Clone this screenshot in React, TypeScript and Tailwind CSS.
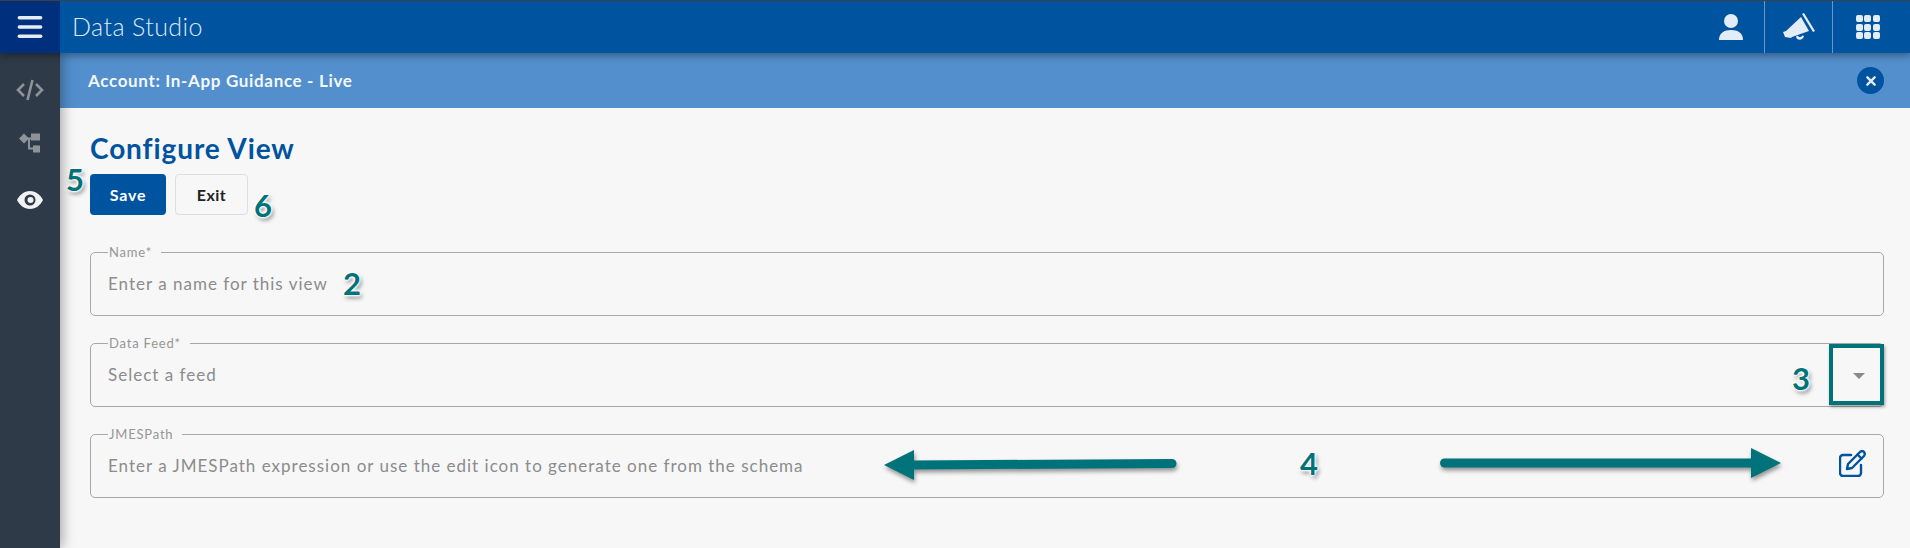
import { Menu } from 'lucide-react';

const teal = '#00737a';

const Callout = ({ n, className }: { n: string; className: string }) => (
  <span
    className={`absolute text-[31px] leading-none font-bold text-[#00737a] [text-shadow:0_0_2px_#fff,0_0_2px_#fff,0_0_3px_#fff,0_0_3px_#fff,0_0_4px_#fff,2px_3px_4px_rgba(0,0,0,0.5)] ${className}`}
  >
    {n}
  </span>
);

const Field = ({
  label,
  placeholder,
  children,
}: {
  label: string;
  placeholder: string;
  children?: React.ReactNode;
}) => (
  <fieldset className="relative h-[70px] rounded-[5px] border border-[#a8a8a8] pl-[17px] pr-4">
    <legend className="ml-0 px-[5px] -translate-x-[4px] text-[13px] leading-[13px] tracking-[0.8px] text-[#969696]">
      {label}
    </legend>
    <div className="mt-[15px] text-[17px] leading-[20px] tracking-[1px] text-[#8c8c8c]">{placeholder}</div>
    {children}
  </fieldset>
);

export default function App() {
  return (
    <div className="flex h-[548px] w-[1910px] flex-col overflow-hidden bg-[#f7f7f7] font-['Lato',sans-serif]">
      <div className="h-px shrink-0 bg-[#444]" />

      {/* Top bar */}
      <header className="relative z-20 flex h-[52px] shrink-0 items-center bg-[#00539f] shadow-[0_3px_7px_rgba(0,0,0,0.35)]">
        <div className="flex h-full w-[60px] items-center justify-center bg-[#002f7d]">
          <Menu size={32} strokeWidth={2.6} className="text-[#e4ecf5]" />
        </div>
        <div className="ml-[12px] text-[25px] font-light tracking-[0.4px] text-[#dfe9f4]">Data Studio</div>
        <div className="ml-auto flex h-full">
          <div className="flex w-[69px] items-center justify-center pl-[3px]">
            <svg width="26" height="28" viewBox="0 0 26 28" fill="#e3edf7">
              <circle cx="13" cy="8" r="7" />
              <path d="M1 27c0-7 5-10 12-10s12 3 12 10z" />
            </svg>
          </div>
          <div className="flex w-[68px] items-center justify-center border-l border-[#6d95c4]">
            <svg width="32" height="28" viewBox="0 0 32 28" fill="#e3edf7">
              <path d="M0 19l3-1L18 4l8 14-17 6-1 1-6-1z" />
              <path d="M19 1l2-1 11 18-2 1z" />
              <path d="M13 23.500c.5 4.500 7 4.500 8-.5l-2-.5c-.5 2-3.500 2-4 0z" />
            </svg>
          </div>
          <div className="flex w-[78px] items-center justify-center border-l border-[#6d95c4] pr-[8px]">
            <div className="grid grid-cols-3 gap-[1.5px]">
              {[1, 2, 3, 4, 5, 6, 7, 8, 9].map((i) => (
                <span key={i} className="h-[7px] w-[7px] rounded-[2px] bg-[#e3edf7]" />
              ))}
            </div>
          </div>
        </div>
      </header>

      <div className="flex min-h-0 flex-1">
        {/* Side nav */}
        <nav className="relative z-10 flex w-[60px] shrink-0 flex-col items-center bg-[#2e3a47] shadow-[2px_0_12px_rgba(0,0,0,0.35)]">
          <svg className="mt-[26px]" width="28" height="22" viewBox="0 0 28 22" fill="none" stroke="#8e9399" strokeWidth="2.6">
            <path d="M8 5l-6 6 6 6M20 5l6 6-6 6M16.500 1l-5 20" />
          </svg>
          <svg className="mt-[31px]" width="22" height="22" viewBox="0 0 22 21" fill="#8e9399">
            <path d="M0 6l5-5 5 5-5 5z" />
            <rect x="12" y="1" width="9" height="7" />
            <rect x="14" y="13" width="7" height="7" />
            <path d="M8 5h5v2H8zM9 5h2v12H9zM9 15h6v2H9z" />
          </svg>
          <svg className="mt-[37px]" width="26" height="18" viewBox="0 0 26 18">
            <path d="M13 0C7 0 2.500 4 0 9c2.500 5 7 9 13 9s10.500-4 13-9c-2.500-5-7-9-13-9z" fill="#f0f2f4" />
            <circle cx="13" cy="9" r="5.500" fill="#2e3a47" />
            <circle cx="13.500" cy="9" r="3" fill="#f0f2f4" />
          </svg>
        </nav>

        <main className="relative min-w-0 flex-1">
          {/* Account banner */}
          <div className="flex h-[55px] items-center justify-between bg-[#528fcc] pl-[28px] pr-[26px]">
            <span className="text-[17px] font-bold tracking-[0.66px] text-[#f4f8fc]">Account: In-App Guidance - Live</span>
            <span className="flex h-[27px] w-[27px] items-center justify-center rounded-full bg-[#00539f]">
              <svg width="10" height="10" viewBox="0 0 11 11" stroke="#e8e8e8" strokeWidth="2.6" strokeLinecap="round">
                <path d="M1.500 1.500l8 8M9.500 1.500l-8 8" />
              </svg>
            </span>
          </div>

          <div className="pl-[30px] pr-[26px]">
            <h1 className="mt-[23px] text-[28px] leading-[34px] font-bold tracking-[0.9px] text-[#00539f]">Configure View</h1>
            <div className="mt-[9px] flex gap-[9px]">
              <button className="h-[41px] w-[76px] rounded-[4px] bg-[#00539f] text-[16px] font-bold tracking-[0.8px] text-white">
                Save
              </button>
              <button className="h-[41px] w-[73px] rounded-[4px] border border-[#dedede] bg-[#f7f7f7] text-[16px] font-bold tracking-[0.5px] text-[#222]">
                Exit
              </button>
            </div>

            <div className="mt-[31px] flex flex-col gap-[21px]">
              <Field label="Name*" placeholder="Enter a name for this view" />
              <Field label="Data Feed*" placeholder="Select a feed">
                <span className="absolute right-[18px] top-[23px] h-0 w-0 border-x-[6px] border-t-[6px] border-x-transparent border-t-[#8a8a8a]" />
              </Field>
              <Field label="JMESPath" placeholder="Enter a JMESPath expression or use the edit icon to generate one from the schema">
                <svg
                  className="absolute right-[17px] top-[9px]"
                  width="27"
                  height="27"
                  viewBox="0 0 27 27"
                  fill="none"
                  stroke="#00539f"
                  strokeWidth="2.400"
                  strokeLinecap="round"
                  strokeLinejoin="round"
                >
                  <path d="M12 5H4a3 3 0 0 0-3 3v15a3 3 0 0 0 3 3h15a3 3 0 0 0 3-3v-8" />
                  <path d="M8 19l1-5L21 2c1.500-1.300 3-1.300 4 0s1 2.700 0 4L13 18z" />
                  <path d="M18.500 4.500l4 4" />
                </svg>
              </Field>
            </div>
          </div>

          {/* Annotations laid over the form */}
          <Callout n="5" className="left-[6px] top-[111px]" />
          <Callout n="6" className="left-[194px] top-[137px]" />
          <Callout n="2" className="left-[283px] top-[215px]" />
          <Callout n="3" className="left-[1732px] top-[310px]" />
          <Callout n="4" className="left-[1240px] top-[395px]" />
          <div
            className="absolute left-[1769px] top-[291px] h-[61px] w-[55px] border-[4px] shadow-[1px_2px_3px_rgba(0,0,0,0.35)]"
            style={{ borderColor: teal }}
          />
          <svg className="absolute left-[820px] top-[391px] overflow-visible drop-shadow-[1px_3px_2px_rgba(0,0,0,0.4)]" width="300" height="40" viewBox="0 0 300 40">
            <path d="M30 21L292 19.500" stroke={teal} strokeWidth="9" strokeLinecap="round" />
            <path d="M4 21L34 6v30z" fill={teal} />
          </svg>
          <svg className="absolute left-[1380px] top-[390px] overflow-visible drop-shadow-[1px_3px_2px_rgba(0,0,0,0.4)]" width="345" height="40" viewBox="0 0 345 40">
            <path d="M4.500 20H315" stroke={teal} strokeWidth="9" strokeLinecap="round" />
            <path d="M341 20L311 5v30z" fill={teal} />
          </svg>
        </main>
      </div>
    </div>
  );
}
